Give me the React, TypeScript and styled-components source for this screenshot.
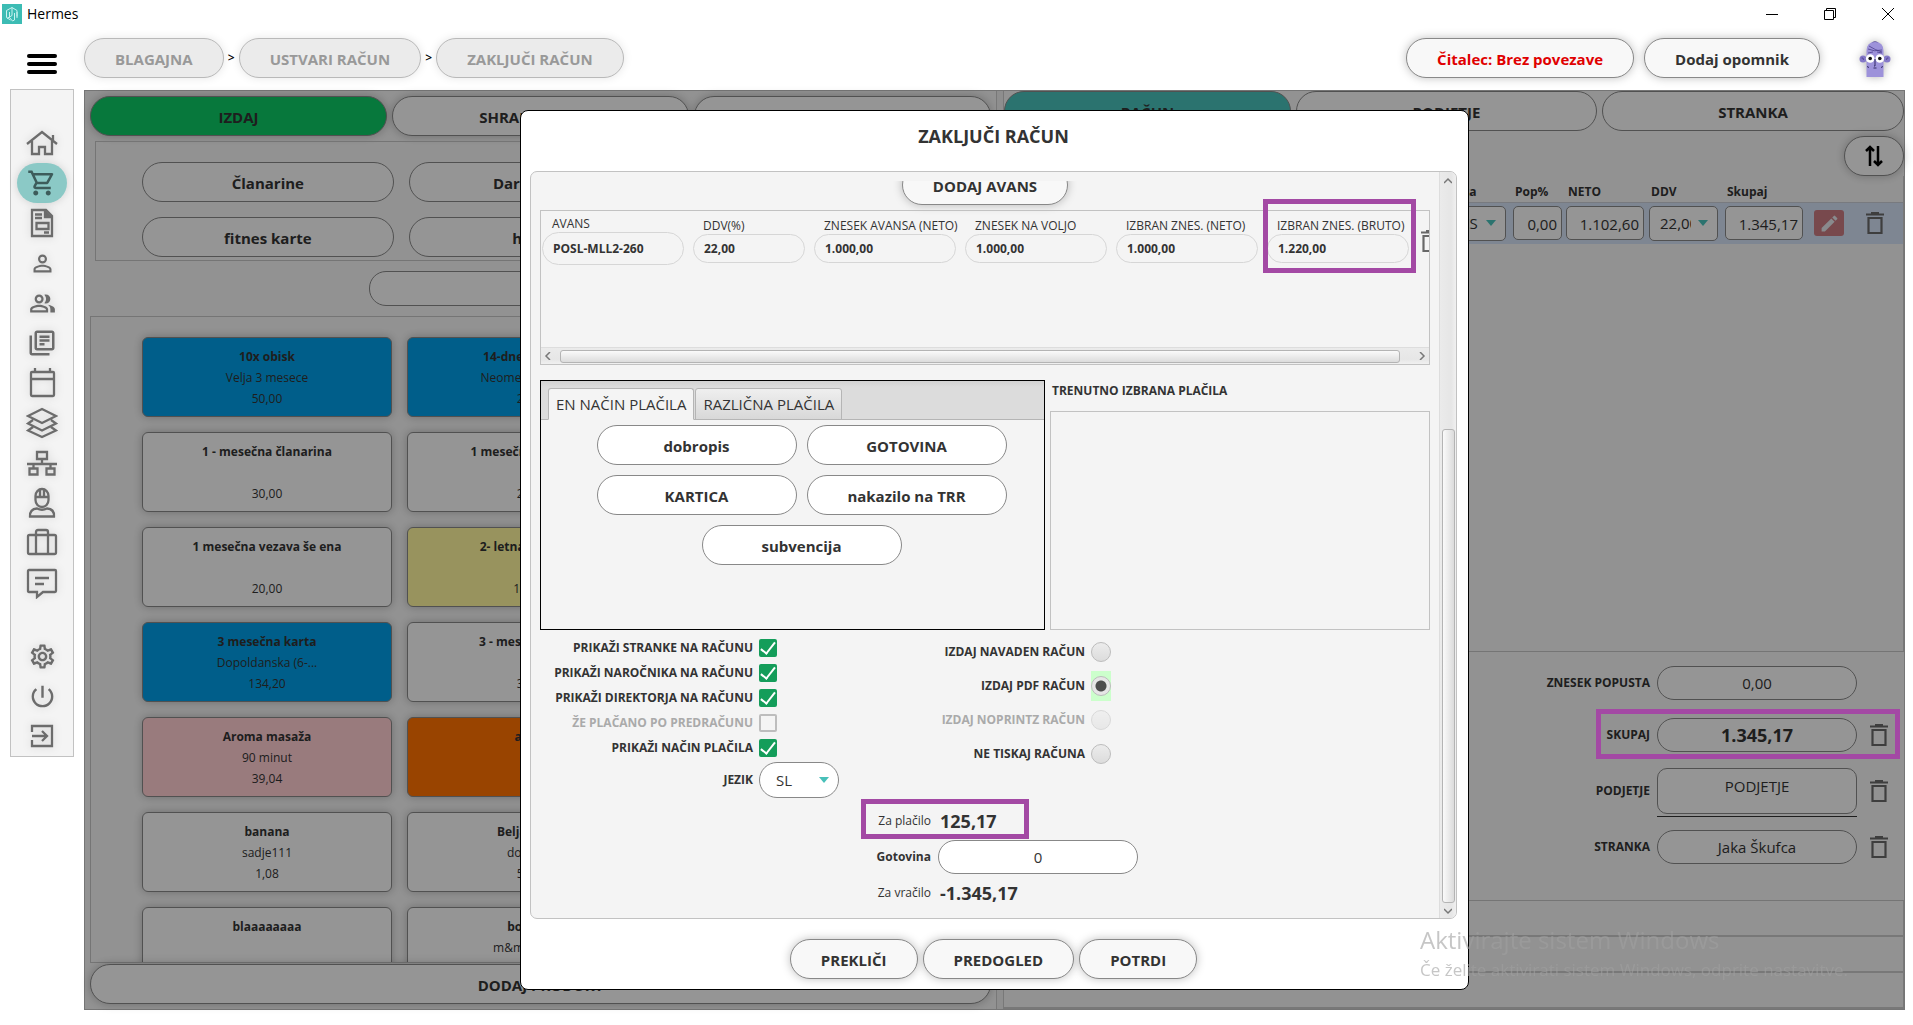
import React from "react";
import styled, { createGlobalStyle, css } from "styled-components";
import {
  MdOutlineShoppingCart,
  MdPersonOutline,
  MdOutlinePeopleAlt,
  MdOutlineLibraryBooks,
  MdOutlineSettings,
  MdPowerSettingsNew,
  MdEdit,
} from "react-icons/md";

const GlobalStyle = createGlobalStyle`
  * { box-sizing: border-box; }
  body { margin: 0; background: #fff; }
  body, button, input, select, textarea {
    font-family: "Open Sans", "Noto Sans", sans-serif;
    font-size: 15px;
    line-height: 20px;
    color: #333;
  }
  button { cursor: pointer; }
`;

/* ---------- shell ---------- */

const Shell = styled.div`
  display: flex;
  flex-direction: column;
  height: 100vh;
  overflow: hidden;
`;

const TitleBar = styled.header`
  display: flex;
  align-items: center;
  height: 28px;
  padding: 0 17px 0 2px;
`;

const AppName = styled.h1`
  flex: 1;
  margin: 0 0 0 5px;
  font-size: 14px;
  font-weight: 400;
  color: #000;
`;

const WindowButtons = styled.div`
  display: flex;
  gap: 42px;
`;

const WindowButton = styled.button`
  display: flex;
  padding: 0;
  border: 0;
  background: none;
  svg { width: 16px; height: 16px; fill: none; stroke: #000; }
`;

const TopBar = styled.div`
  display: flex;
  align-items: center;
  gap: 10px;
  height: 60px;
  padding: 0 20px;
`;

const MenuButton = styled.button`
  display: flex;
  flex-direction: column;
  gap: 4px;
  width: 44px;
  margin: 12px 10px 0 0;
  padding: 0 7px;
  border: 0;
  background: none;
  span { height: 4px; border-radius: 2px; background: #000; }
`;

const Crumbs = styled.nav`
  display: flex;
  flex: 1;
  align-items: center;
`;

const CrumbGap = styled.span`
  width: 15px;
  text-align: center;
  font-size: 12px;
  font-weight: 600;
  color: #000;
`;

const Pill = styled.button<{ $tone?: "plain" | "flat" | "white" | "muted"; $bg?: string; $color?: string }>`
  height: 40px;
  padding: 2px 30px 0;
  border: 1px solid #888;
  border-radius: 20px;
  background: ${(p) => p.$bg ?? "#f8f8f8"};
  box-shadow: 0 0 10px rgba(0, 0, 0, 0.25);
  color: ${(p) => p.$color ?? "#333"};
  font-weight: 700;
  white-space: nowrap;
  ${(p) => (p.$tone === "flat" || p.$tone === "white") && css`box-shadow: none;`}
  ${(p) => p.$tone === "white" && css`background: #fff;`}
  ${(p) => p.$tone === "muted" && css`
    background: #ebebeb;
    border-color: #b9b9b9;
    color: #999;
    box-shadow: 0 0 10px rgba(0, 0, 0, 0.1);
  `}
`;

const Avatar = styled.button`
  display: flex;
  margin-left: 27px;
  padding: 0;
  border: 0;
  background: none;
  svg { width: 36px; height: 40px; filter: drop-shadow(0 0 4px rgba(0, 0, 0, 0.3)); }
`;

const Body = styled.div`
  display: flex;
  flex: 1;
  align-items: flex-start;
  gap: 10px;
  min-height: 0;
  padding: 2px 8px 15px 10px;
`;

const Sidebar = styled.nav`
  display: flex;
  flex-direction: column;
  align-items: center;
  width: 64px;
  margin-top: -1px;
  padding: 33px 0 0;
  border: 1px solid #c2c2c2;
  background: #f4f4f4;
`;

const SideButton = styled.button<{ $active?: boolean; $spaced?: boolean }>`
  display: flex;
  align-items: center;
  justify-content: center;
  width: 50px;
  height: 40px;
  margin-top: ${(p) => (p.$spaced ? "33px" : "0")};
  padding: 0;
  border: 0;
  border-radius: 20px;
  background: ${(p) => (p.$active ? "#8bc9c6" : "none")};
  color: ${(p) => (p.$active ? "#3d5c5b" : "#6c6c6c")};
  filter: drop-shadow(0 0 4px rgba(0, 0, 0, 0.15));
`;

const Line = styled.svg.attrs({ viewBox: "0 0 32 32", width: 32, height: 32, fill: "none", stroke: "currentColor" })`
  stroke-width: 2.300;
`;

/* ---------- main area ---------- */

const Main = styled.main`
  position: relative;
  display: flex;
  flex: 1;
  align-self: stretch;
  min-width: 0;
  border: 1px solid #c4c4c4;
  background: #f4f4f4;
`;

const LeftPane = styled.section`
  display: flex;
  flex: 1 1 0;
  flex-direction: column;
  min-width: 0;
  padding: 5px;
`;

const Splitter = styled.div`
  width: 8px;
  border: 1px solid #c8c8c8;
  border-width: 0 1px;
  background: #ededed;
`;

const RightPane = styled.section`
  display: flex;
  flex: 0 0 900px;
  flex-direction: column;
`;

const ActionRow = styled.div<{ $cols: string }>`
  display: grid;
  grid-template-columns: ${(p) => p.$cols};
  gap: 5px;
`;

const CategoryBox = styled.div`
  display: grid;
  grid-template-columns: repeat(3, 1fr);
  gap: 15px;
  margin: 5px 5px 0;
  padding: 20px 58px 3px 46px;
  border: 1px solid #c4c4c4;
`;

const CategoryButton = styled(Pill)<{ $col: number }>`
  grid-column: ${(p) => p.$col};
  box-shadow: none;
`;

const SearchBox = styled.input`
  align-self: center;
  width: 344px;
  height: 35px;
  margin: 10px 0;
  padding: 0 16px;
  border: 1px solid #888;
  border-radius: 17px;
  background: #f8f8f8;
`;

const ArticleBox = styled.div`
  display: grid;
  flex: 1 1 0;
  grid-template-columns: repeat(3, 1fr);
  grid-auto-rows: 80px;
  gap: 15px;
  min-height: 0;
  overflow: hidden;
  margin-bottom: 1px;
  padding: 20px 68px 0 51px;
  border: 1px solid #c4c4c4;
`;

const Article = styled.button<{ $bg?: string; $col?: number }>`
  display: grid;
  grid-column: ${(p) => p.$col};
  grid-template-rows: repeat(3, 21px);
  align-content: start;
  padding: 8px 8px 0;
  border: 1px solid #888;
  border-radius: 6px;
  background: ${(p) => p.$bg ?? "#f8f8f8"};
  box-shadow: 0 0 10px rgba(0, 0, 0, 0.25);
  font-size: 12px;
  line-height: 21px;
  white-space: nowrap;
`;

const SortButton = styled(Pill)`
  display: flex;
  align-items: center;
  align-self: flex-end;
  justify-content: center;
  width: 60px;
  margin-top: 5px;
  padding: 0;
`;

const ItemTable = styled.table`
  width: 100%;
  border-collapse: collapse;
  table-layout: fixed;
  margin-top: 5px;
  th {
    height: 21px;
    padding: 1px 0 0 3px;
    font-size: 12px;
    font-weight: 700;
    text-align: left;
  }
  td {
    height: 41px;
    padding: 0;
    border-top: 1px solid #c8ccd4;
    background: #d3dff3;
  }
`;

const CellInput = styled.input`
  width: 100%;
  height: 34px;
  padding: 2px 4px 0;
  border: 1px solid #888;
  border-radius: 5px;
  background: #f8f8f8;
  text-align: right;
`;

const CellWrap = styled.div<{ $end: number }>`
  display: flex;
  align-items: center;
  padding: 0 ${(p) => p.$end}px 0 1px;
`;

const SelectWrap = styled.span`
  position: relative;
  display: inline-flex;
  width: 100%;
  svg { position: absolute; right: 10px; top: 50%; width: 10px; height: 6px; margin-top: -3px; fill: #48c0b9; pointer-events: none; }
`;

const Select = styled.select<{ $round?: boolean }>`
  width: 100%;
  height: ${(p) => (p.$round ? "36px" : "35px")};
  padding: 0 26px 0 ${(p) => (p.$round ? "16px" : "10px")};
  appearance: none;
  border: 1px solid #888;
  border-radius: ${(p) => (p.$round ? "18px" : "5px")};
  background: ${(p) => (p.$round ? "#fff" : "#f8f8f8")};
  text-overflow: clip;
`;

const IconButton = styled.button<{ $red?: boolean }>`
  display: flex;
  align-items: center;
  justify-content: center;
  width: 30px;
  height: 26px;
  flex: none;
  padding: 0;
  border: 0;
  border-radius: 3px;
  background: ${(p) => (p.$red ? "#c87a80" : "none")};
  color: ${(p) => (p.$red ? "#e4e6ec" : "#686868")};
`;

const RowTrash = styled(IconButton)`
  width: 24px;
  justify-content: flex-end;
  margin-left: -3px;
`;

const Items = styled.div`
  flex: 1;
  border-right: 1px solid #c8c8c8;
`;

const Summary = styled.div`
  position: relative;
  display: grid;
  grid-template-columns: 1fr 200px 30px;
  grid-template-rows: 52px 52px 60px 52px;
  align-content: start;
  align-items: center;
  column-gap: 7px;
  height: 250px;
  padding: 5px 10px 0 0;
  border: 1px solid #c4c4c4;
  border-width: 1px 0;
`;

const SmallLabel = styled.label<{ $dim?: boolean; $light?: boolean }>`
  font-size: 12px;
  line-height: 16px;
  font-weight: ${(p) => (p.$light ? 400 : 700)};
  color: ${(p) => (p.$dim ? "#aaa" : "#333")};
  text-align: right;
  white-space: nowrap;
`;

const RoundInput = styled.input<{ $big?: boolean; $white?: boolean }>`
  width: 200px;
  height: 34px;
  padding: 0 12px;
  border: 1px solid #888;
  border-radius: 17px;
  background: ${(p) => (p.$white ? "#fff" : "#f8f8f8")};
  text-align: center;
  ${(p) => p.$big && css`font-size: 18px; font-weight: 700;`}
`;

const CompanyField = styled.div`
  display: flex;
  margin-bottom: -3px;
  border-bottom: 1px solid #333;
  padding-bottom: 2px;
`;

const CompanyArea = styled.textarea`
  width: 200px;
  height: 46px;
  padding: 7px 12px;
  resize: none;
  border: 1px solid #888;
  border-radius: 10px;
  background: #f8f8f8;
  text-align: center;
`;

const Strip = styled.div`
  height: 36px;
  border: 0 solid #c8c8c8;
  border-width: 0 1px 2px 0;
`;

/* ---------- dialog ---------- */

const Backdrop = styled.div`
  position: absolute;
  inset: -1px;
  display: flex;
  align-items: center;
  justify-content: center;
  background: rgba(0, 0, 0, 0.4);
`;

const Dialog = styled.div`
  display: flex;
  flex-direction: column;
  width: 949px;
  padding: 0 11px 10px 9px;
  border: 1px solid #000;
  border-radius: 8px;
  background: #fff;
`;

const DialogTitle = styled.h2`
  margin: 14px 0 23px;
  font-size: 18px;
  line-height: 23px;
  font-weight: 700;
  text-align: center;
`;

const ScrollPanel = styled.div`
  display: flex;
  overflow: hidden;
  border: 1px solid #c2c2c2;
  border-radius: 7px;
  background: #f4f4f4;
`;

const ScrollContent = styled.div`
  flex: 1;
  min-width: 0;
  height: 728px;
  margin: 9px;
  overflow: hidden;
`;

const Bar = styled.div<{ $vertical?: boolean }>`
  display: flex;
  flex-direction: ${(p) => (p.$vertical ? "column" : "row")};
  align-items: center;
  justify-content: space-between;
  ${(p) => (p.$vertical
    ? css`width: 17px; padding: 5px 0 3px; border-left: 1px solid #ddd;`
    : css`height: 17px; padding: 0 3px 0 3px; border-top: 1px solid #ddd;`)}
  background: linear-gradient(${(p) => (p.$vertical ? "90deg" : "180deg")}, #ebebeb, #e6e6e6 70%, #f0f0f0);
  svg { width: 8px; height: 8px; fill: none; stroke: #777; }
`;

const Thumb = styled.div<{ $vertical?: boolean }>`
  border: 1px solid #b4b4b4;
  border-radius: 3px;
  ${(p) => (p.$vertical
    ? css`width: 13px; height: 474px; margin: auto 0 4px; background: linear-gradient(90deg, #fafafa, #dcdcdc);`
    : css`flex: 1; height: 13px; margin: 0 18px 0 8px; background: linear-gradient(#fafafa, #dcdcdc);`)}
`;

const AvansButton = styled(Pill)`
  display: block;
  margin: -16px auto 5px;
`;

const AvansBox = styled.div`
  border: 1px solid #c2c2c2;
  height: 155px;
  display: flex;
  flex-direction: column;
  justify-content: space-between;
`;

const AvansRow = styled.div`
  display: flex;
  align-items: center;
  gap: 9px;
  overflow: hidden;
  padding: 5px 0 0 1px;
`;

const AvansField = styled.div<{ $w: number }>`
  display: flex;
  flex: none;
  flex-direction: column;
  width: ${(p) => p.$w}px;
`;

const AvansLabel = styled.label`
  padding-left: 10px;
  font-size: 12px;
  line-height: 16px;
  white-space: nowrap;
`;

const AvansInput = styled.input<{ $tall?: boolean }>`
  width: 100%;
  height: ${(p) => (p.$tall ? "33px" : "29px")};
  padding: 0 10px;
  border: 1px solid #d6d6d6;
  border-radius: 17px;
  background: none;
  font-size: 12px;
  font-weight: 700;
`;

const Marker = styled.div<{ $inset: string }>`
  position: absolute;
  z-index: 1;
  inset: ${(p) => p.$inset};
  border: 5px solid #a349a4;
  pointer-events: none;
`;

const AvansWrap = styled.div`
  position: relative;
`;

const Payments = styled.div`
  display: grid;
  grid-template-columns: 505px 1fr;
  gap: 5px;
  height: 250px;
  margin-top: 15px;
`;

const TabPanel = styled.div`
  border: 1px solid #000;
`;

const TabList = styled.div`
  display: flex;
  align-items: flex-end;
  gap: 1px;
  height: 39px;
  padding-left: 7px;
  border-bottom: 1px solid #b5b5b5;
  background: linear-gradient(#d2d2d2, #dcdcdc 6px);
`;

const Tab = styled.button<{ $on?: boolean }>`
  height: 32px;
  margin-bottom: -1px;
  padding: 0 7px;
  border: 1px solid #b5b5b5;
  border-bottom-color: ${(p) => (p.$on ? "#f4f4f4" : "#b5b5b5")};
  border-radius: 3px 3px 0 0;
  background: ${(p) => (p.$on ? "#f4f4f4" : "linear-gradient(#efefef, #d8d8d8)")};
  white-space: nowrap;
`;

const Methods = styled.div`
  display: flex;
  flex-wrap: wrap;
  justify-content: center;
  gap: 10px;
  padding: 5px 19px 0 37px;
`;

const MethodButton = styled(Pill)`
  width: 200px;
`;

const Selected = styled.div`
  display: flex;
  flex-direction: column;
`;

const SelectedTitle = styled.h3`
  margin: 2px 0 11px 2px;
  font-size: 12px;
  line-height: 18px;
  font-weight: 700;
`;

const SelectedBox = styled.div`
  flex: 1;
  border: 1px solid #c2c2c2;
`;

const Options = styled.div`
  display: grid;
  grid-template-columns: 299px 272px;
  justify-content: start;
  margin-top: 5px;
`;

const OptionList = styled.div<{ $radio?: boolean }>`
  display: flex;
  flex-direction: column;
  align-items: flex-end;
  padding-right: ${(p) => (p.$radio ? "0" : "62px")};
`;

const OptionRow = styled.div<{ $h: number }>`
  display: flex;
  align-items: center;
  justify-content: flex-end;
  gap: 6px;
  height: ${(p) => p.$h}px;
`;

const Check = styled.input.attrs({ type: "checkbox" })`
  display: flex;
  align-items: center;
  justify-content: center;
  width: 18px;
  height: 18px;
  margin: 0;
  appearance: none;
  border: 2px solid #bdbdbd;
  border-radius: 2px;
  background: #f4f4f4;
  &:checked { border-color: #149d5a; background: #149d5a; }
  &:checked::after {
    content: "";
    width: 6px;
    height: 13px;
    margin-top: -3px;
    border: solid #fff;
    border-width: 0 2px 2px 0;
    transform: rotate(38deg);
  }
`;

const Radio = styled.input.attrs({ type: "radio" })`
  width: 20px;
  height: 20px;
  margin: 0;
  appearance: none;
  border: 1px solid #bcbcbc;
  border-radius: 50%;
  background: linear-gradient(#ececec, #dcdcdc);
  &:checked { background: radial-gradient(circle, #4d4d4d 5px, #e6e6e6 6px); }
  &:disabled { opacity: 0.5; }
`;

const RadioCell = styled.span<{ $on?: boolean }>`
  display: flex;
  align-items: center;
  height: 30px;
  background: ${(p) => (p.$on ? "#ccffcc" : "none")};
`;

const LanguageField = styled.span`
  display: flex;
  width: 80px;
  margin-right: -62px;
`;

const Totals = styled.div`
  display: grid;
  grid-template-columns: 391px 200px;
  column-gap: 7px;
  align-items: center;
  margin-top: 4px;
`;

const Amount = styled.output`
  padding-left: 2px;
  font-size: 18px;
  line-height: 36px;
  font-weight: 700;
`;

const TotalRow = styled.div`
  position: relative;
  display: grid;
  grid-column: 1 / -1;
  grid-template-columns: subgrid;
  align-items: center;
  height: 36px;
`;

const DialogActions = styled.div`
  display: flex;
  justify-content: center;
  gap: 5px;
  margin-top: 20px;
`;

const Watermark = styled.div`
  position: fixed;
  z-index: 2;
  right: 68px;
  bottom: 43px;
  width: 425px;
  color: rgba(160, 160, 160, 0.6);
  white-space: nowrap;
  pointer-events: none;
  p { margin: 0; font-size: 17px; line-height: 24px; }
  p:first-child { font-size: 24px; line-height: 36px; }
`;

/* ---------- drawings ---------- */

const Logo = () => (
  <svg width="20" height="20" viewBox="0 0 20 20" fill="none" stroke="#c9f3f0" strokeWidth="1">
    <rect width="20" height="20" fill="#3cbcb4" stroke="none" />
    <path d="M10 3.500l-5.500 3v7l4 2.500M10 3.500v8l-5 3M10 3.500l5 3v6M7.500 8v5.500l3 3.500 2-1v-7M15 8v6" />
  </svg>
);

const Trash = () => (
  <svg width="18" height="22" viewBox="0 0 18 22" fill="none" stroke="currentColor" strokeWidth="2.200">
    <path d="M0 2.500h18M5 1h8" />
    <path d="M2.500 6h13v15h-13z" />
  </svg>
);

const Caret = () => (
  <svg viewBox="0 0 10 6"><path d="M0 0h10L5 6z" /></svg>
);

const Chevron = ({ d }: { d: string }) => (
  <svg viewBox="0 0 8 8" strokeWidth="1.500"><path d={d} /></svg>
);

const SortArrows = () => (
  <svg width="18" height="22" viewBox="0 0 18 22" fill="none" stroke="#000" strokeWidth="2.500">
    <path d="M5 21V2M1 6l4-4 4 4M13 1v19M9 16l4 4 4-4" />
  </svg>
);

const Face = () => (
  <svg viewBox="0 0 36 40">
    <path d="M14.500 5a4 3.500 0 0 1 7 0z" fill="#4b3f8c" />
    <path d="M9.500 13q0-9 8.500-9t8.500 9v26h-17z" fill="#9d92da" />
    <circle cx="6" cy="21" r="3.500" fill="#8478c8" />
    <circle cx="30" cy="21" r="3.500" fill="#8478c8" />
    <path d="M4.500 20q2-1 2 2M31.500 20q-2-1-2 2M11 11q6 3 14 1M12 8q6 4 13 6M11 15l5-1M20 14l5 1" fill="none" stroke="#4b3f8c" strokeWidth="0.800" />
    <circle cx="13.200" cy="20.500" r="4.300" fill="#fff" />
    <circle cx="22.800" cy="20.500" r="4.300" fill="#fff" />
    <circle cx="13.200" cy="20.500" r="1.800" fill="#111" />
    <circle cx="22.800" cy="20.500" r="1.800" fill="#111" />
    <path d="M18 21v7h-1M16.500 30h3M10.500 28l1 2M25.500 28l-1 2" fill="none" stroke="#332b66" />
  </svg>
);

const HomeIcon = () => (
  <Line><path d="M1 17L16 5l15 12M27 13V8M6 14v13h7v-7h6v7h7V14" /></Line>
);
const DocIcon = () => (
  <Line>
    <path d="M6 3h14l6 6v20H6z" />
    <path d="M19 3v7h7" fill="currentColor" />
    <path d="M10.500 16h12v6h-12zM9 7.500h7M9 11h7M18 25.500h5" />
  </Line>
);
const CalendarIcon = () => (
  <Line><rect x="5" y="5" width="23" height="24" rx="1" /><path d="M5 12h23M9 1v4M24 1v4" /></Line>
);
const LayersIcon = () => (
  <Line>
    <path d="M16 2l14 7-14 7L2 9zM7 13l-5 3.500 14 7 14-7-5-3.500M7 20l-5 3.500L16 30l14-6.500-5-3.500" />
  </Line>
);
const NetworkIcon = () => (
  <Line><path d="M11 5h10v7H11zM16 12v5M1 17h30M7.500 17v5M24.500 17v5M3.500 21.500h8v6h-8zM20.500 21.500h8v6h-8z" /></Line>
);
const WorkerIcon = () => (
  <Line>
    <path d="M9.500 9v4a6.500 7 0 0 0 13 0V9a6.500 7 0 0 0-13 0zM8.500 10h15M14 2.500v7M18 2.500v7" />
    <path d="M4 29.500q-.5-7.500 7-8 5 2.500 10 0 7.500.5 7 8z" />
  </Line>
);
const CaseIcon = () => (
  <Line><rect x="2" y="8" width="28" height="19" rx="1.500" /><path d="M10 27V5q0-2 2-2h8q2 0 2 2v22" /></Line>
);
const ChatIcon = () => (
  <Line><path d="M3 3h26q1 0 1 1v20q0 1-1 1H17l-6 5v-5H3q-1 0-1-1V4q0-1 1-1zM9 11h14M9 17h9" /></Line>
);
const ExitIcon = () => (
  <Line><path d="M6 12V6h20v20H6v-6M6 16h15M16 11l5 5-5 5" /></Line>
);

/* ---------- data ---------- */

const sideItems = [
  { label: "Domov", icon: <HomeIcon /> },
  { label: "Blagajna", icon: <MdOutlineShoppingCart size={30} />, active: true },
  { label: "Dokumenti", icon: <DocIcon /> },
  { label: "Stranka", icon: <MdPersonOutline size={27} /> },
  { label: "Stranke", icon: <MdOutlinePeopleAlt size={27} /> },
  { label: "Knjižnica", icon: <MdOutlineLibraryBooks size={30} /> },
  { label: "Koledar", icon: <CalendarIcon /> },
  { label: "Zaloga", icon: <LayersIcon /> },
  { label: "Organizacija", icon: <NetworkIcon /> },
  { label: "Zaposleni", icon: <WorkerIcon /> },
  { label: "Poslovanje", icon: <CaseIcon /> },
  { label: "Sporočila", icon: <ChatIcon /> },
  { label: "Nastavitve", icon: <MdOutlineSettings size={29} />, spaced: true },
  { label: "Izklop", icon: <MdPowerSettingsNew size={29} /> },
  { label: "Odjava", icon: <ExitIcon /> },
];

const categories = ["Članarine", "Darilni bon", "fitnes karte", "hrana"];

const blue = "#009de6";
const articles = [
  { name: "10x obisk", note: "Velja 3 mesece", price: "50,00", bg: blue },
  { name: "14-dnevna karta", note: "Neomejeno 14 dni", price: "25,00", bg: blue },
  { name: "1 - mesečna članarina", note: "", price: "30,00" },
  { name: "1 mesečna članarina", note: "", price: "25,00" },
  { name: "1 mesečna vezava še ena", note: "", price: "20,00" },
  { name: "2- letna članarina", note: "", price: "150,00", bg: "#fdf59d" },
  { name: "3 mesečna karta", note: "Dopoldanska (6-...", price: "134,20", bg: blue },
  { name: "3 - mesečna karta", note: "", price: "30,00" },
  { name: "Aroma masaža", note: "90 minut", price: "39,04", bg: "#ffcdd0" },
  { name: "avans", note: "", price: "", bg: "#ff7200" },
  { name: "banana", note: "sadje111", price: "1,08" },
  { name: "Beljakovine", note: "dobropis", price: "50,00" },
  { name: "blaaaaaaaa", note: "", price: "" },
  { name: "bonboni", note: "m&m bonbon", price: "" },
];

const avansFields = [
  { id: "avans", label: "AVANS", value: "POSL-MLL2-260", w: 142, tall: true },
  { id: "ddv", label: "DDV(%)", value: "22,00", w: 112 },
  { id: "neto", label: "ZNESEK AVANSA (NETO)", value: "1.000,00", w: 142 },
  { id: "voljo", label: "ZNESEK NA VOLJO", value: "1.000,00", w: 142 },
  { id: "izneto", label: "IZBRAN ZNES. (NETO)", value: "1.000,00", w: 142 },
  { id: "izbruto", label: "IZBRAN ZNES. (BRUTO)", value: "1.220,00", w: 142 },
];

const checks = [
  { id: "c1", label: "PRIKAŽI STRANKE NA RAČUNU", on: true },
  { id: "c2", label: "PRIKAŽI NAROČNIKA NA RAČUNU", on: true },
  { id: "c3", label: "PRIKAŽI DIREKTORJA NA RAČUNU", on: true },
  { id: "c4", label: "ŽE PLAČANO PO PREDRAČUNU", on: false, off: true },
  { id: "c5", label: "PRIKAŽI NAČIN PLAČILA", on: true },
];

const radios = [
  { id: "r1", label: "IZDAJ NAVADEN RAČUN" },
  { id: "r2", label: "IZDAJ PDF RAČUN", on: true },
  { id: "r3", label: "IZDAJ NOPRINTZ RAČUN", off: true },
  { id: "r4", label: "NE TISKAJ RAČUNA" },
];

const crumbs = ["BLAGAJNA", "USTVARI RAČUN", "ZAKLJUČI RAČUN"];

/* ---------- sections ---------- */

const PaymentDialog = () => (
  <Dialog role="dialog" aria-labelledby="dialog-title">
    <DialogTitle id="dialog-title">ZAKLJUČI RAČUN</DialogTitle>
    <ScrollPanel>
      <ScrollContent>
        <AvansButton>DODAJ AVANS</AvansButton>
        <AvansWrap>
          <AvansBox>
            <AvansRow>
              {avansFields.map((f) => (
                <AvansField key={f.id} $w={f.w}>
                  <AvansLabel htmlFor={f.id}>{f.label}</AvansLabel>
                  <AvansInput id={f.id} $tall={f.tall} defaultValue={f.value} />
                </AvansField>
              ))}
              <RowTrash aria-label="Odstrani avans"><Trash /></RowTrash>
            </AvansRow>
            <Bar>
              <Chevron d="M6 0L2 4l4 4" />
              <Thumb />
              <Chevron d="M2 0l4 4-4 4" />
            </Bar>
          </AvansBox>
          <Marker $inset="-11px 14px 92px 723px" />
        </AvansWrap>

        <Payments>
          <TabPanel>
            <TabList role="tablist">
              <Tab role="tab" aria-selected="true" $on>EN NAČIN PLAČILA</Tab>
              <Tab role="tab" aria-selected="false">RAZLIČNA PLAČILA</Tab>
            </TabList>
            <Methods>
              {["dobropis", "GOTOVINA", "KARTICA", "nakazilo na TRR", "subvencija"].map((m) => (
                <MethodButton key={m} $tone="white">{m}</MethodButton>
              ))}
            </Methods>
          </TabPanel>
          <Selected>
            <SelectedTitle>TRENUTNO IZBRANA PLAČILA</SelectedTitle>
            <SelectedBox />
          </Selected>
        </Payments>

        <Options>
          <OptionList>
            {checks.map((c) => (
              <OptionRow key={c.id} $h={25}>
                <SmallLabel htmlFor={c.id} $dim={c.off}>{c.label}</SmallLabel>
                <Check id={c.id} defaultChecked={c.on} disabled={c.off} />
              </OptionRow>
            ))}
            <OptionRow $h={39}>
              <SmallLabel htmlFor="lang">JEZIK</SmallLabel>
              <LanguageField>
                <SelectWrap>
                  <Select id="lang" $round><option>SL</option></Select>
                  <Caret />
                </SelectWrap>
              </LanguageField>
            </OptionRow>
          </OptionList>
          <OptionList $radio>
            {radios.map((r) => (
              <OptionRow key={r.id} $h={34}>
                <SmallLabel htmlFor={r.id} $dim={r.off}>{r.label}</SmallLabel>
                <RadioCell $on={r.on}>
                  <Radio id={r.id} name="print" defaultChecked={r.on} disabled={r.off} />
                </RadioCell>
              </OptionRow>
            ))}
          </OptionList>
        </Options>

        <Totals>
          <TotalRow>
            <SmallLabel $light htmlFor="due">Za plačilo</SmallLabel>
            <Amount id="due">125,17</Amount>
            <Marker $inset="-4px 109px 0 321px" />
          </TotalRow>
          <TotalRow>
            <SmallLabel htmlFor="cash">Gotovina</SmallLabel>
            <RoundInput id="cash" $white defaultValue="0" />
          </TotalRow>
          <TotalRow>
            <SmallLabel $light htmlFor="change">Za vračilo</SmallLabel>
            <Amount id="change">-1.345,17</Amount>
          </TotalRow>
        </Totals>
      </ScrollContent>
      <Bar $vertical>
        <Chevron d="M0 6l4-4 4 4" />
        <Thumb $vertical />
        <Chevron d="M0 2l4 4 4-4" />
      </Bar>
    </ScrollPanel>
    <DialogActions>
      <Pill>PREKLIČI</Pill>
      <Pill>PREDOGLED</Pill>
      <Pill>POTRDI</Pill>
    </DialogActions>
  </Dialog>
);

const Invoice = () => (
  <RightPane>
    <ActionRow $cols="287fr 301fr 302fr">
      <Pill $tone="flat" $bg="#48c0b9">RAČUN</Pill>
      <Pill $tone="flat">PODJETJE</Pill>
      <Pill $tone="flat">STRANKA</Pill>
    </ActionRow>
    <SortButton aria-label="Razvrsti"><SortArrows /></SortButton>
    <Items>
      <ItemTable>
        <colgroup>
          <col />
          <col style={{ width: 73 }} />
          <col style={{ width: 53 }} />
          <col style={{ width: 83 }} />
          <col style={{ width: 76 }} />
          <col style={{ width: 89 }} />
          <col style={{ width: 46 }} />
          <col style={{ width: 44 }} />
        </colgroup>
        <thead>
          <tr>
            <th /><th>Enota</th><th>Pop%</th><th>NETO</th><th>DDV</th><th>Skupaj</th><th /><th />
          </tr>
        </thead>
        <tbody>
          <tr>
            <td />
            <td><CellWrap $end={6}><SelectWrap><Select aria-label="Enota"><option>PCS</option></Select><Caret /></SelectWrap></CellWrap></td>
            <td><CellWrap $end={3}><CellInput aria-label="Popust" defaultValue="0,00" /></CellWrap></td>
            <td><CellWrap $end={4}><CellInput aria-label="Neto" defaultValue="1.102,60" /></CellWrap></td>
            <td><CellWrap $end={6}><SelectWrap><Select aria-label="DDV"><option>22,00</option></Select><Caret /></SelectWrap></CellWrap></td>
            <td><CellWrap $end={10}><CellInput aria-label="Skupaj" defaultValue="1.345,17" /></CellWrap></td>
            <td><CellWrap $end={0}><IconButton $red aria-label="Uredi"><MdEdit size={21} /></IconButton></CellWrap></td>
            <td><CellWrap $end={0}><IconButton aria-label="Izbriši"><Trash /></IconButton></CellWrap></td>
          </tr>
        </tbody>
      </ItemTable>
    </Items>
    <Summary>
      <SmallLabel htmlFor="discount">ZNESEK POPUSTA</SmallLabel>
      <RoundInput id="discount" defaultValue="0,00" />
      <span />
      <SmallLabel htmlFor="total">SKUPAJ</SmallLabel>
      <RoundInput id="total" $big defaultValue="1.345,17" />
      <IconButton aria-label="Počisti skupaj"><Trash /></IconButton>
      <SmallLabel htmlFor="company">PODJETJE</SmallLabel>
      <CompanyField><CompanyArea id="company" defaultValue="PODJETJE" /></CompanyField>
      <IconButton aria-label="Počisti podjetje"><Trash /></IconButton>
      <SmallLabel htmlFor="client">STRANKA</SmallLabel>
      <RoundInput id="client" defaultValue="Jaka Škufca" />
      <IconButton aria-label="Počisti stranko"><Trash /></IconButton>
      <Marker $inset="57px 4px 141px 592px" />
    </Summary>
    <Strip />
    <Strip />
    <Strip />
  </RightPane>
);

export default function App() {
  return (
    <Shell>
      <GlobalStyle />
      <TitleBar>
        <Logo />
        <AppName>Hermes</AppName>
        <WindowButtons>
          <WindowButton aria-label="Pomanjšaj"><svg viewBox="0 0 16 16"><path d="M2 8.500h12" /></svg></WindowButton>
          <WindowButton aria-label="Obnovi"><svg viewBox="0 0 16 16"><path d="M2.500 4.500h9v9h-9zM4.500 4.500v-2h9v9h-2" /></svg></WindowButton>
          <WindowButton aria-label="Zapri"><svg viewBox="0 0 16 16"><path d="M2 2l12 12M14 2L2 14" /></svg></WindowButton>
        </WindowButtons>
      </TitleBar>
      <TopBar>
        <MenuButton aria-label="Meni"><span /><span /><span /></MenuButton>
        <Crumbs>
          {crumbs.map((c, i) => (
            <React.Fragment key={c}>
              {i > 0 && <CrumbGap>&gt;</CrumbGap>}
              <Pill $tone="muted">{c}</Pill>
            </React.Fragment>
          ))}
        </Crumbs>
        <Pill $color="#e00000">Čitalec: Brez povezave</Pill>
        <Pill>Dodaj opomnik</Pill>
        <Avatar aria-label="Profil"><Face /></Avatar>
      </TopBar>
      <Body>
        <Sidebar>
          {sideItems.map((s) => (
            <SideButton key={s.label} aria-label={s.label} $active={s.active} $spaced={s.spaced}>{s.icon}</SideButton>
          ))}
        </Sidebar>
        <Main>
          <LeftPane>
            <ActionRow $cols="repeat(3, 1fr)">
              <Pill $bg="#0dc864">IZDAJ</Pill>
              <Pill>SHRANI NAKUPE</Pill>
              <Pill>PREKINI</Pill>
            </ActionRow>
            <CategoryBox>
              {categories.map((c, i) => (
                <CategoryButton key={c} $col={(i % 2) + 1}>{c}</CategoryButton>
              ))}
            </CategoryBox>
            <SearchBox aria-label="Iskanje" />
            <ArticleBox>
              {articles.map((a, i) => (
                <Article key={a.name} $bg={a.bg} $col={(i % 2) + 1}>
                  <b>{a.name}</b>
                  <span>{a.note}</span>
                  <span>{a.price}</span>
                </Article>
              ))}
            </ArticleBox>
            <Pill>DODAJ PRODUKT</Pill>
          </LeftPane>
          <Splitter />
          <Invoice />
          <Backdrop><PaymentDialog /></Backdrop>
        </Main>
      </Body>
      <Watermark>
        <p>Aktivirajte sistem Windows</p>
        <p>Če želite aktivirati sistem Windows, odprite nastavitve.</p>
      </Watermark>
    </Shell>
  );
}
